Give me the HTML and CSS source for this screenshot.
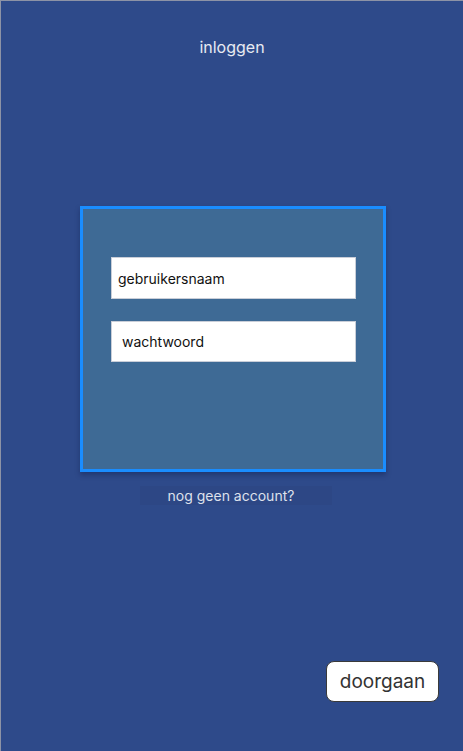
FILE: index.html
```html
<!DOCTYPE html>
<html lang="nl">
<head>
<meta charset="utf-8">
<title>inloggen</title>
<link rel="stylesheet" href="styles.css">
</head>
<body>
<div class="screen">
  <h1 class="title">inloggen</h1>
  <div class="card">
    <div class="field">gebruikersnaam</div>
    <div class="field field-pw">wachtwoord</div>
  </div>
  <div class="link">nog geen account?</div>
  <div class="actions">
    <button class="btn">doorgaan</button>
  </div>
</div>
</body>
</html>
```
FILE: styles.css
```css
* { box-sizing: border-box; }
html, body { margin: 0; padding: 0; }
body {
  background: #2e4a8a;
  font-family: Inter, "Noto Sans", sans-serif;
}
.screen {
  width: 463px;
  height: 751px;
  border-top: 1px solid #8d93a6;
  border-left: 1px solid #8d93a6;
  display: flex;
  flex-direction: column;
}
.title {
  margin: 36px 0 0;
  text-align: center;
  font-weight: 400;
  font-size: 16px;
  line-height: 20px;
  color: #e8eaf2;
}
.card {
  margin: 149px 0 0 79px;
  width: 306px;
  height: 266px;
  background: #3e6a95;
  border: 3px solid #1a8dff;
  box-shadow: 0 3px 5px rgba(10, 20, 60, 0.35);
  padding: 48px 0 0 28px;
  display: flex;
  flex-direction: column;
  gap: 22px;
}
.field {
  width: 245px;
  height: 42px;
  background: #fff;
  border: 1px solid #c9ced8;
  padding-left: 6px;
  display: flex;
  align-items: center;
  font-size: 14px;
  color: #111;
}
.field-pw {
  height: 41px;
  padding-left: 10px;
}
.link {
  margin: 14px 0 0 139px;
  width: 192px;
  height: 19px;
  padding-right: 10px;
  background: #2d4785;
  color: #dde1ec;
  font-size: 14px;
  line-height: 19px;
  text-align: center;
}
.actions {
  margin-top: 156px;
  display: flex;
  justify-content: flex-end;
  padding-right: 24px;
}
.btn {
  width: 113px;
  height: 41px;
  background: #fff;
  border: 1px solid #3a3a3a;
  border-radius: 8px;
  font-family: Inter, "Noto Sans", sans-serif;
  font-size: 19px;
  color: #333;
  padding: 0;
}
```
